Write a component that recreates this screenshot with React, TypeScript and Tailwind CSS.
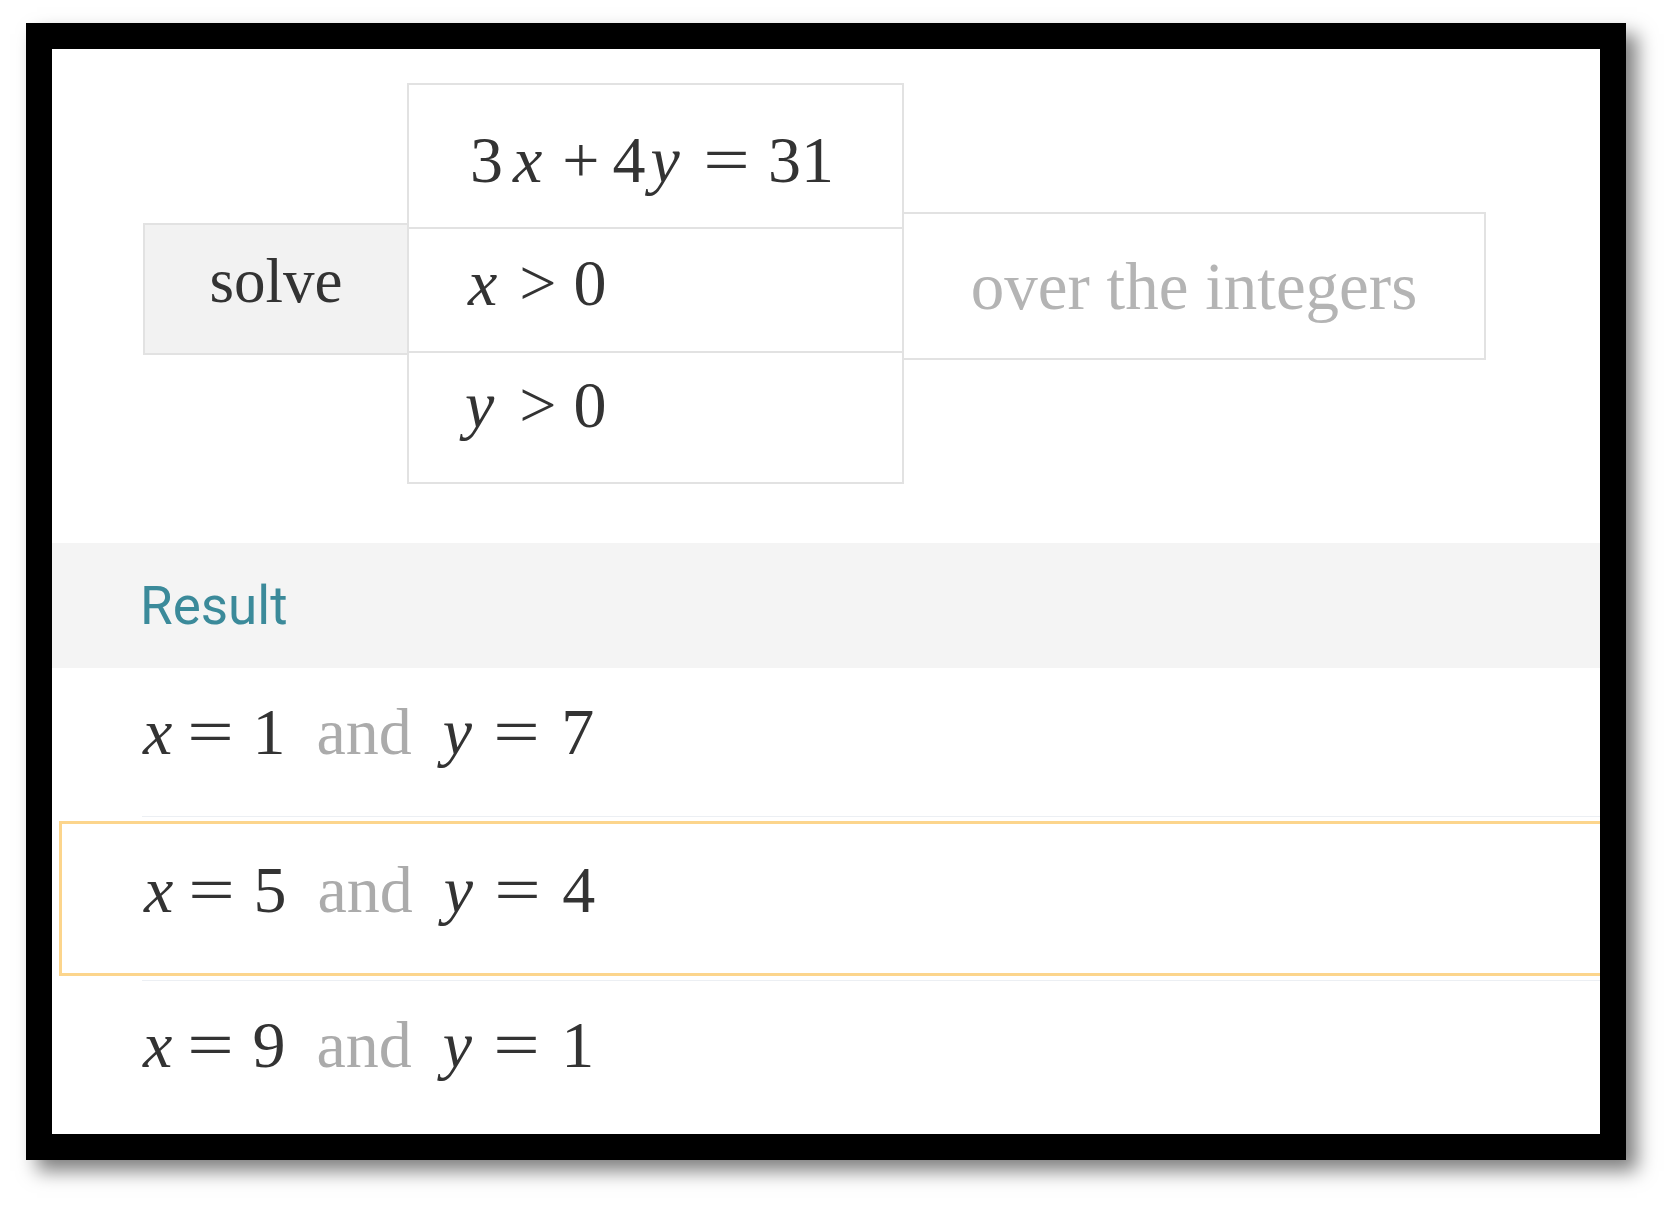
import React from 'react';

// Liberation Serif stands in for the math font; '=' is stretched a bit wider
const serif = "font-['Liberation_Serif',serif]";

const Eq: React.FC<{ className?: string }> = ({ className = '' }) => (
  <span className={`inline-block scale-x-125 ${className}`}>=</span>
);

const V: React.FC<{ c: string; className?: string }> = ({ c, className = '' }) => (
  <span className={`italic ${className}`}>{c}</span>
);

const Solution: React.FC<{ x: string; y: string }> = ({ x, y }) => (
  <div className={`${serif} text-[66px] leading-none text-[#333] whitespace-nowrap`}>
    <V c="x" />
    <Eq className="ml-[20px]" />
    <span className="ml-[23px]">{x}</span>
    <span className="ml-[31px] text-[#ababab]">and</span>
    <V c="y" className="ml-[31px]" />
    <Eq className="ml-[26px]" />
    <span className="ml-[26px]">{y}</span>
  </div>
);

const App: React.FC = () => {
  return (
    <div className="min-h-screen bg-white pt-[23px] pl-[26px]">
      <div className="w-[1600px] h-[1137px] border-[26px] border-black bg-white overflow-hidden shadow-[11px_11px_18px_rgba(0,0,0,0.5)] flex flex-col">

        {/* Input table */}
        <div className="h-[494px] shrink-0 flex items-start pl-[91px] pt-[34px]">
          <div className="mt-[140px] w-[264px] h-[132px] border-2 border-r-0 border-[#e2e2e2] bg-[#f2f2f2] flex justify-center pt-[25px]">
            <span className={`${serif} text-[63px] leading-none text-[#333]`}>solve</span>
          </div>

          <div className={`w-[497px] border-2 border-[#e2e2e2] ${serif} text-[66px] leading-none text-[#333] whitespace-nowrap`}>
            <div className="h-[142px] pl-[61px] pt-[42px]">
              <span>3</span>
              <V c="x" className="ml-[10px]" />
              <span className="ml-[20px]">+</span>
              <span className="ml-[13px]">4</span>
              <V c="y" className="ml-[5px]" />
              <Eq className="ml-[28px]" />
              <span className="ml-[23px]">31</span>
            </div>
            <div className="h-[124px] border-t-2 border-[#e2e2e2] pl-[59px] pt-[21px]">
              <V c="x" />
              <span className="ml-[22px]">&gt;</span>
              <span className="ml-[17px]">0</span>
            </div>
            <div className="h-[131px] border-t-2 border-[#e2e2e2] pl-[56px] pt-[19px]">
              <V c="y" />
              <span className="ml-[25px]">&gt;</span>
              <span className="ml-[17px]">0</span>
            </div>
          </div>

          <div className="mt-[129px] w-[582px] h-[148px] border-2 border-l-0 border-[#e2e2e2] flex justify-center pt-[39px]">
            <span className={`${serif} text-[67px] leading-none text-[#b4b4b4]`}>over the integers</span>
          </div>
        </div>

        {/* Result header */}
        <div className="h-[125px] shrink-0 bg-[#f4f4f4] pl-[88px] pt-[37px]">
          <span className="font-['Roboto',sans-serif] text-[53px] leading-none text-[#3b8a9a]">Result</span>
        </div>

        {/* Solutions */}
        <div className="h-[148px] shrink-0 pl-[91px] pt-[31px]">
          <Solution x="1" y="7" />
        </div>
        <div className="h-px shrink-0 ml-[90px] bg-[#eceff3]" />
        <div className="h-[155px] shrink-0 mt-[4px] ml-[7px] -mr-[10px] border-[3px] border-[#fcd58c] pl-[82px] pt-[33px]">
          <Solution x="5" y="4" />
        </div>
        <div className="h-px shrink-0 mt-[4px] ml-[90px] bg-[#eceff3]" />
        <div className="flex-1 pl-[91px] pt-[31px]">
          <Solution x="9" y="1" />
        </div>
      </div>
    </div>
  );
};

export default App;
